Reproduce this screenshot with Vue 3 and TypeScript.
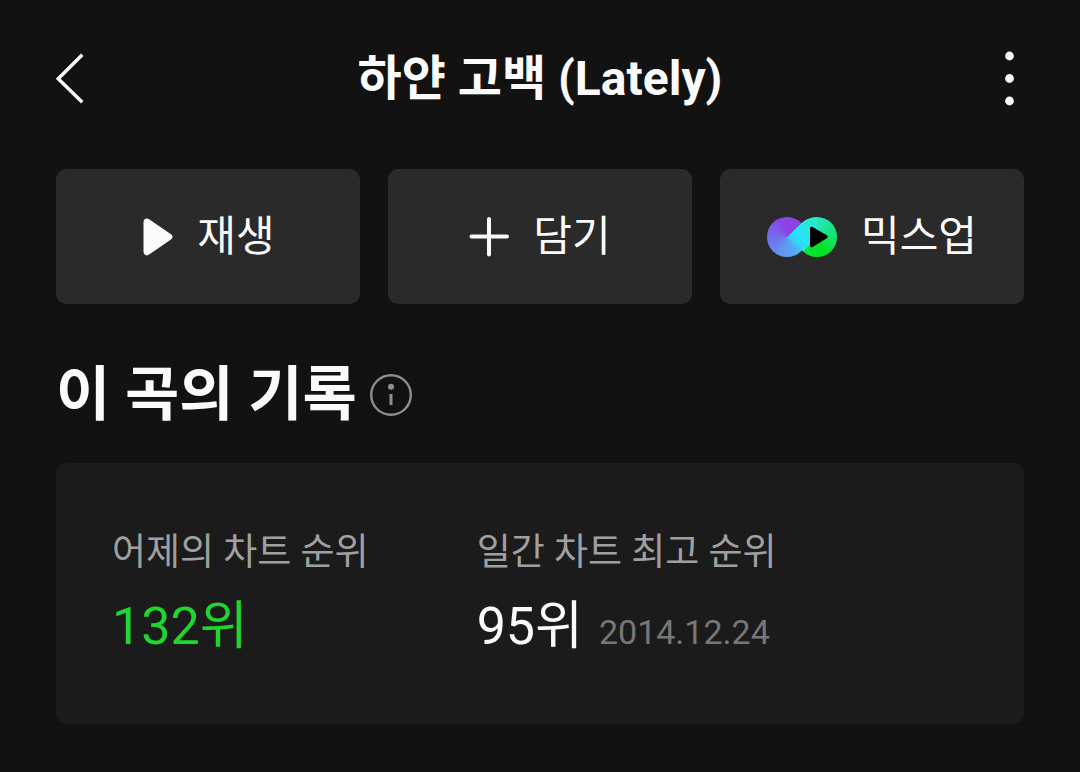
<script setup lang="ts">
interface ChartRecord {
  label: string
  rank: string
  date?: string
  highlighted: boolean
}

const title = '하얀 고백 (Lately)'

const records: ChartRecord[] = [
  { label: '어제의 차트 순위', rank: '132위', highlighted: true },
  { label: '일간 차트 최고 순위', rank: '95위', date: '2014.12.24', highlighted: false },
]
</script>

<template>
  <main class="page">
    <header class="header">
      <button class="icon-button" type="button" aria-label="뒤로">
        <svg width="28" height="52" viewBox="0 0 28 52" fill="none">
          <path d="M26.3 1.8 2.2 25.8 26.3 49.3" stroke="#fafafa" stroke-width="3.5" />
        </svg>
      </button>
      <h1 class="title">{{ title }}</h1>
      <button class="icon-button icon-button-end" type="button" aria-label="더보기">
        <svg width="28" height="56" viewBox="0 0 28 56" fill="#fafafa">
          <circle cx="13.5" cy="5" r="4.4" />
          <circle cx="13.5" cy="27.5" r="4.4" />
          <circle cx="13.5" cy="50" r="4.4" />
        </svg>
      </button>
    </header>

    <div class="actions">
      <button class="action" type="button">
        <svg width="32" height="38" viewBox="0 0 32 38" fill="#fafafa">
          <path d="M2.5 4.2C2.5.9 5.4-.7 8.1 1.2L30 16.2c2 1.4 2 3.8 0 5.2L8.1 36.6C5.4 38.5 2.5 36.9 2.5 33.6Z" />
        </svg>
        <span>재생</span>
      </button>
      <button class="action" type="button">
        <svg width="40" height="40" viewBox="0 0 40 40" fill="none">
          <path d="M2.5 19.5H38M20 2V37.5" stroke="#fafafa" stroke-width="4" stroke-linecap="round" />
        </svg>
        <span>담기</span>
      </button>
      <button class="action" type="button">
        <span class="mixup-logo">
          <svg width="70" height="40" viewBox="0 0 70 40">
            <defs>
              <linearGradient id="ribbon" x1="20" y1="33" x2="48" y2="7" gradientUnits="userSpaceOnUse">
                <stop offset="0" stop-color="#35c8f8" stop-opacity="0" />
                <stop offset=".5" stop-color="#2ae2fa" />
                <stop offset=".75" stop-color="#28e6e6" />
                <stop offset="1" stop-color="#28e8cc" />
              </linearGradient>
            </defs>
            <path d="M20 20 34.2 6.5C38.5 2.4 43.5.5 50 .5V20L34 34Z" fill="url(#ribbon)" />
            <path d="M43 11.4c0-1.5 1.3-2.2 2.6-1.4L59.8 18.3c1.2.8 1.2 2.2 0 3L45.6 29.9c-1.3.8-2.6.1-2.6-1.4Z" fill="#000" />
          </svg>
        </span>
        <span>믹스업</span>
      </button>
    </div>

    <section>
      <div class="section-head">
        <h2 class="section-title">이 곡의 기록</h2>
        <button class="info" type="button" aria-label="안내">
          <svg width="42" height="42" viewBox="0 0 42 42">
            <circle cx="21" cy="21" r="19.8" fill="none" stroke="#8f8f8f" stroke-width="2.4" />
            <circle cx="21" cy="12.7" r="3" fill="#8f8f8f" />
            <path d="M21 20V31" stroke="#8f8f8f" stroke-width="3" />
          </svg>
        </button>
      </div>
      <dl class="card">
        <div v-for="record in records" :key="record.label">
          <dt class="label">{{ record.label }}</dt>
          <dd class="value">
            <span class="rank" :class="{ highlighted: record.highlighted }">{{ record.rank }}</span>
            <time v-if="record.date" class="date">{{ record.date }}</time>
          </dd>
        </div>
      </dl>
    </section>
  </main>
</template>

<style>
body {
  margin: 0;
  background: #121212;
}
</style>

<style scoped>
.page {
  box-sizing: border-box;
  min-height: 100vh;
  padding: 0 56px 48px;
  background: #121212;
  color: #fafafa;
  font-family: Roboto, "Noto Sans CJK KR", sans-serif;
}

button {
  margin: 0;
  padding: 0;
  border: 0;
  background: none;
  color: inherit;
  font: inherit;
  cursor: pointer;
}

svg {
  display: block;
  flex: none;
}

.header {
  display: grid;
  grid-template-columns: 56px 1fr 56px;
  align-items: center;
  height: 157px;
}

.icon-button-end {
  justify-self: end;
}

.title {
  margin: 0;
  font-size: 48px;
  line-height: 64px;
  font-weight: 700;
  text-align: center;
}

.actions {
  display: grid;
  grid-template-columns: repeat(3, 1fr);
  gap: 28px;
  margin-top: 12px;
}

.action {
  display: flex;
  align-items: center;
  justify-content: center;
  gap: 24px;
  height: 135px;
  border-radius: 10px;
  background: #2a2a2a;
  font-size: 42px;
  line-height: 60px;
}

.mixup-logo {
  position: relative;
  isolation: isolate;
}

.mixup-logo::before,
.mixup-logo::after {
  content: "";
  position: absolute;
  z-index: -1;
  top: 0;
  width: 40px;
  height: 40px;
  border-radius: 50%;
}

.mixup-logo::before {
  left: 0;
  background: conic-gradient(from 46deg, #2ed8fa, #48b8f8 80deg, #6296f2 150deg, #7270ea 220deg, #8a48e4 290deg, #9040e4);
}

.mixup-logo::after {
  right: 0;
  background: conic-gradient(from 225deg, #2ae2fa, #28e6d0 100deg, #20e6a0 165deg, #12e470 220deg, #00e420 290deg, #06e23c);
}

.section-head {
  display: flex;
  align-items: center;
  gap: 13px;
  margin-top: 49px;
}

.section-title {
  margin: 0;
  font-size: 59px;
  line-height: 84px;
  font-weight: 700;
}

.card {
  display: flex;
  gap: 108px;
  margin: 26px 0 0;
  padding: 60px 56px 52px;
  border-radius: 10px;
  background: #1b1b1b;
}

.label {
  color: #a0a0a0;
  font-size: 37px;
  line-height: 60px;
}

.value {
  display: flex;
  align-items: baseline;
  gap: 16px;
  margin: 4px 0 0;
  line-height: 80px;
}

.rank {
  font-size: 52px;
}

.highlighted {
  color: #1ed62d;
}

.date {
  color: #777;
  font-size: 34px;
}
</style>
